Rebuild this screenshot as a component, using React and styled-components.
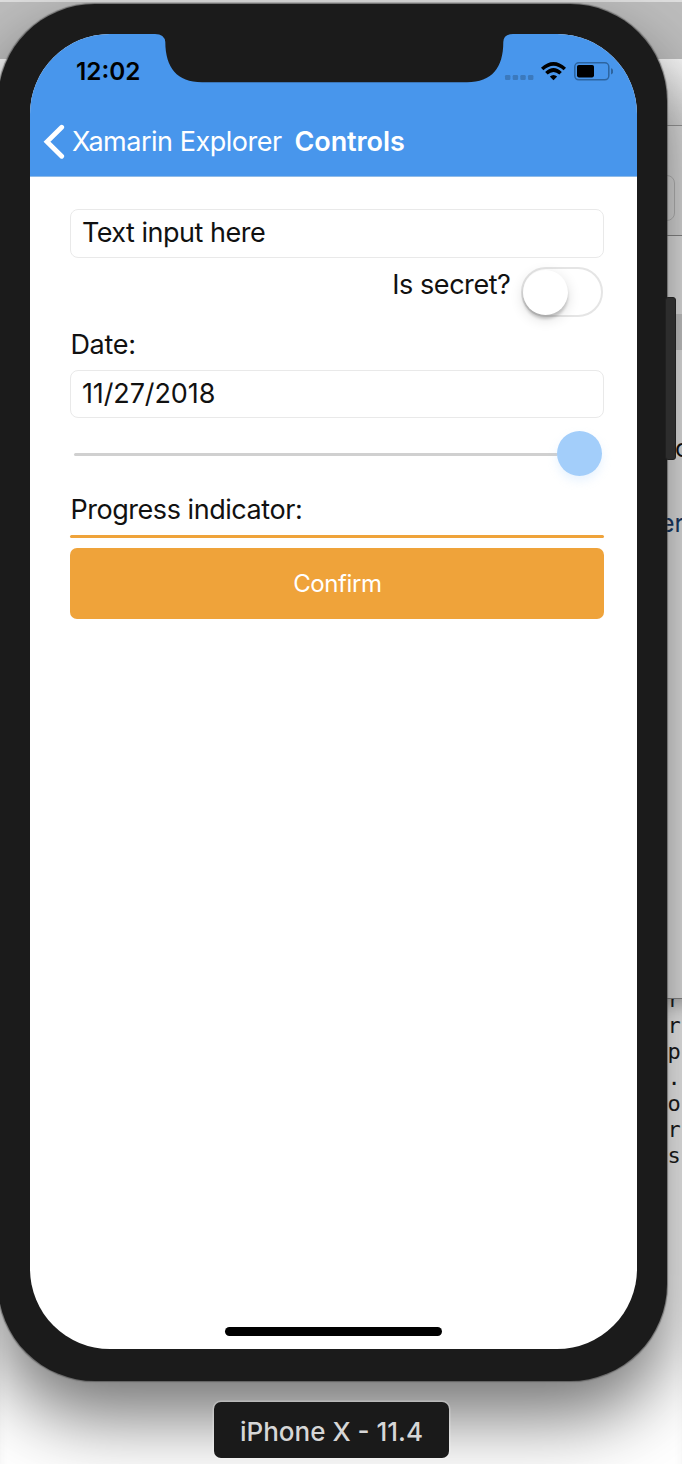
import React from "react";
import styled, { createGlobalStyle } from "styled-components";

const Global = createGlobalStyle`
  * { box-sizing: border-box; }
  body { margin: 0; background: #fff; }
`;

const Desktop = styled.main`
  position: relative;
  width: 682px;
  height: 1464px;
  overflow: hidden;
  font-family: Inter, "Liberation Sans", sans-serif;
`;

const Backdrop = styled.div`
  position: absolute;
  inset: 0;
  display: flex;
  flex-direction: column;
`;

const MenuStrip = styled.div`
  height: 59px;
  background: #bdbdbd;
  border-top: 2px solid #dedede;
`;

const WindowToolbar = styled.div`
  height: 67px;
  background: linear-gradient(#f6f6f6, #dedede);
  border-bottom: 1px solid #9c9c9c;
`;

const WindowTabs = styled.div`
  height: 110px;
  padding-top: 49px;
  background: #e4e4e4;
  border-bottom: 1px solid #8d8d8d;
`;

const TabOutline = styled.div`
  width: 675px;
  height: 46px;
  border: 1px solid #bfbfbf;
  border-radius: 8px;
`;

const WindowBody = styled.div`
  height: 763px;
  padding-top: 78px;
  background: #ececec;
  border-bottom: 1px solid #8d8d8d;
`;

const SelectedRow = styled.div`
  height: 36px;
  background: #cdcdcd;
`;

const WindowText = styled.div`
  margin-top: ${(p) => p.$top}px;
  padding-left: ${(p) => p.$left}px;
  font-size: 25px;
  line-height: 30px;
  white-space: nowrap;
  color: ${(p) => p.$color};
`;

const Editor = styled.pre`
  flex: 1;
  margin: 0;
  padding-left: 667.5px;
  overflow: hidden;
  background: #fff;
  box-shadow: inset 0 18px 18px -12px rgba(0, 0, 0, 0.3);
  font: 22px/26px "DejaVu Sans Mono", monospace;
  color: #1c1c1c;
`;

const EditorLines = styled.div`
  margin-top: -12px;
`;

const VolumeKey = styled.div`
  position: absolute;
  left: 665px;
  top: 297px;
  width: 11px;
  height: 163px;
  border: 1px solid #202020;
  border-radius: 3px;
  background: #2d2d2d;
`;

const Phone = styled.section`
  position: relative;
  width: 669px;
  height: 1376.5px;
  margin: 4px 0 0 -2px;
  padding: 30px 30px 31px 32px;
  border-radius: 97px;
  background: #1b1b1b;
  box-shadow: 0 0 1px 0.5px rgba(70, 70, 70, 0.6), 0 36px 72px rgba(0, 0, 0, 0.55);
`;

const Stage = styled.div`
  position: relative;
  display: flow-root;
`;

const Screen = styled.div`
  position: relative;
  display: flex;
  flex-direction: column;
  width: 607px;
  height: 1315px;
  border-radius: 80px;
  overflow: hidden;
  background: #fff;
`;

const Notch = styled.svg`
  position: absolute;
  left: 123px;
  top: -1px;
`;

const Header = styled.header`
  height: 143px;
  background: #4896ec;
  border-bottom: 1px solid #8fbbe8;
`;

const StatusBar = styled.div`
  display: flex;
  justify-content: space-between;
  height: 73px;
  padding: 22px 24px 0 46px;
`;

const Clock = styled.time`
  font-size: 24.3px;
  font-weight: 600;
  line-height: 30px;
  letter-spacing: ${(p) => p.$tracking}px;
  color: #000;
`;

const StatusIcons = styled.svg`
  display: block;
`;

const NavBar = styled.nav`
  display: flex;
  align-items: center;
  height: 69px;
  padding-left: 13px;
  color: #fff;
`;

const BackIcon = styled.svg`
  margin-right: 7px;
`;

const NavText = styled.span`
  font-size: 27px;
  line-height: 34px;
  font-weight: ${(p) => (p.$bold ? 600 : 400)};
  letter-spacing: ${(p) => p.$tracking}px;
  width: ${(p) => p.$width}px;
  white-space: nowrap;
`;

const Form = styled.div`
  display: flex;
  flex-direction: column;
  padding: 31.6px 32.6px 0 40.4px;
`;

const Field = styled.div`
  display: flex;
  align-items: center;
  width: 534px;
  height: ${(p) => p.$height}px;
  padding-left: 10.5px;
  padding-bottom: ${(p) => p.$lift || 0}px;
  border: 1px solid #e9e9e9;
  border-radius: 8px;
`;

const Label = styled.span`
  font-size: 27px;
  line-height: 34px;
  letter-spacing: ${(p) => p.$tracking}px;
  color: #111;
  white-space: nowrap;
`;

const SecretRow = styled.div`
  display: flex;
  justify-content: flex-end;
  gap: 10.5px;
  height: 61px;
  margin-top: 9.4px;
  padding: 1px 1.5px 0 0;
`;

const Switch = styled.div`
  width: 82px;
  height: 50px;
  margin-top: -1px;
  padding: 1px 0;
  border: 2px solid #e5e5e5;
  border-radius: 25px;
`;

const SwitchKnob = styled.div`
  width: 45px;
  height: 45px;
  border-radius: 50%;
  background: #fff;
  box-shadow: 0 4px 3px rgba(0, 0, 0, 0.18), 0 4px 14px rgba(0, 0, 0, 0.14);
`;

const Slider = styled.div`
  display: flex;
  align-items: center;
  height: 45px;
  margin: 13px 0 0 3.5px;
`;

const SliderTrack = styled.div`
  width: 484px;
  height: 3px;
  margin-top: 3px;
  border-radius: 2px;
  background: #d0d0d0;
`;

const SliderThumb = styled.div`
  width: 45px;
  height: 45px;
  margin-left: -1px;
  border-radius: 50%;
  background: #a3cefa;
  box-shadow: 0 5px 10px rgba(163, 206, 250, 0.25);
`;

const Progress = styled.div`
  width: 534px;
  height: 3.5px;
  border-radius: 2px;
  background: #efa33a;
`;

const ConfirmButton = styled.button`
  width: 534px;
  height: 71px;
  margin: 9.5px 0 0;
  padding: 2px 0 0;
  border: 0;
  border-radius: 7px;
  background: #efa33a;
  color: #fff;
  font: 400 24px/30px Inter, "Liberation Sans", sans-serif;
  letter-spacing: ${(p) => p.$tracking}px;
`;

const LabelLine = styled.div`
  display: flex;
  margin-top: ${(p) => p.$top}px;
  height: ${(p) => p.$height}px;
`;

const HomeIndicator = styled.div`
  width: 217px;
  height: 9px;
  margin: auto auto 13px 195px;
  border-radius: 5px;
  background: #000;
`;

const DeviceName = styled.div`
  position: relative;
  display: flex;
  align-items: center;
  justify-content: center;
  width: 235px;
  height: 56px;
  margin: 21.5px 0 0 214px;
  padding-top: 3px;
  border-radius: 7px;
  background: #1a1a1a;
  box-shadow: 0 0 0 1.5px rgba(255, 255, 255, 0.25);
  color: #d6d6d6;
  font-size: 26px;
  font-weight: 500;
  letter-spacing: ${(p) => p.$tracking}px;
  white-space: nowrap;
`;

export default function App() {
  return (
    <Desktop>
      <Global />
      <Backdrop>
        <MenuStrip />
        <WindowToolbar />
        <WindowTabs>
          <TabOutline />
        </WindowTabs>
        <WindowBody>
          <SelectedRow />
          <WindowText $top={83} $left={666} $color="#111">ro</WindowText>
          <WindowText $top={45} $left={660} $color="#173a68">er</WindowText>
        </WindowBody>
        <Editor>
          <EditorLines>{"r,\nr\np\n.:\no\nr\ns"}</EditorLines>
        </Editor>
      </Backdrop>
      <Stage>
        <Phone>
          <Screen>
            <Header>
              <StatusBar>
                <Clock $tracking={0}>12:02</Clock>
                <StatusIcons width="110" height="30" viewBox="503 56 110 30">
                  <g fill="#3b79bd">
                    <rect x="505" y="75" width="5.4" height="5" rx="1.2" />
                    <rect x="512.7" y="75" width="5.4" height="5" rx="1.2" />
                    <rect x="520.3" y="75" width="5.4" height="5" rx="1.2" />
                    <rect x="528" y="75" width="5.4" height="5" rx="1.2" />
                  </g>
                  <g fill="none" stroke="#000" strokeWidth="3.6">
                    <path d="M542.2 69 Q553.5 58.8 564.8 69" />
                    <path d="M546.4 73.3 Q553.5 66.7 560.6 73.3" />
                  </g>
                  <path d="M549.8 76.5 Q553.5 73.3 557.2 76.5 L553.5 80.2 Z" />
                  <rect x="574.8" y="62.8" width="34" height="17" rx="4" fill="none" stroke="#2d649f" strokeWidth="1.5" />
                  <rect x="577" y="65" width="17" height="12.4" rx="1.8" />
                  <path d="M611 68.3 Q613.4 69 613.4 71.3 Q613.4 73.7 611 74.4Z" fill="#2d649f" />
                </StatusIcons>
              </StatusBar>
              <NavBar>
                <BackIcon width="22" height="36" viewBox="0 0 22 36" fill="none">
                  <path d="M18.7 3.2 L4 17.7 L18.7 32.2" stroke="#fff" strokeWidth="4.8" strokeLinecap="round" />
                </BackIcon>
                <NavText $width={222.5} $tracking={-0.48}>Xamarin Explorer</NavText>
                <NavText $bold $width={120} $tracking={-0.08}>Controls</NavText>
              </NavBar>
            </Header>
            <Form>
              <Field $height={49} $lift={1}>
                <Label $tracking={-0.5}>Text input here</Label>
              </Field>
              <SecretRow>
                <Label $tracking={-0.45}>Is secret?</Label>
                <Switch>
                  <SwitchKnob />
                </Switch>
              </SecretRow>
              <LabelLine $top={0} $height={42}>
                <Label $tracking={-0.3}>Date:</Label>
              </LabelLine>
              <Field $height={48}>
                <Label $tracking={-0.1}>11/27/2018</Label>
              </Field>
              <Slider>
                <SliderTrack />
                <SliderThumb />
              </Slider>
              <LabelLine $top={17.4} $height={41.6}>
                <Label $tracking={-0.45}>Progress indicator:</Label>
              </LabelLine>
              <Progress />
              <ConfirmButton $tracking={-0.4}>Confirm</ConfirmButton>
            </Form>
            <HomeIndicator />
            <Notch width="362" height="50" viewBox="153 33 362 50">
              <path
                d="M153 33 H515 V34 H513 Q503.5 34 503.3 42 C503.3 68 492 82 467 82.3 H202 C177 82 165.5 68 165.3 42 Q164.5 34 155 34 H153Z"
                fill="#1b1b1b"
              />
            </Notch>
          </Screen>
        </Phone>
        <VolumeKey />
        <DeviceName $tracking={0}>iPhone X - 11.4</DeviceName>
      </Stage>
    </Desktop>
  );
}
